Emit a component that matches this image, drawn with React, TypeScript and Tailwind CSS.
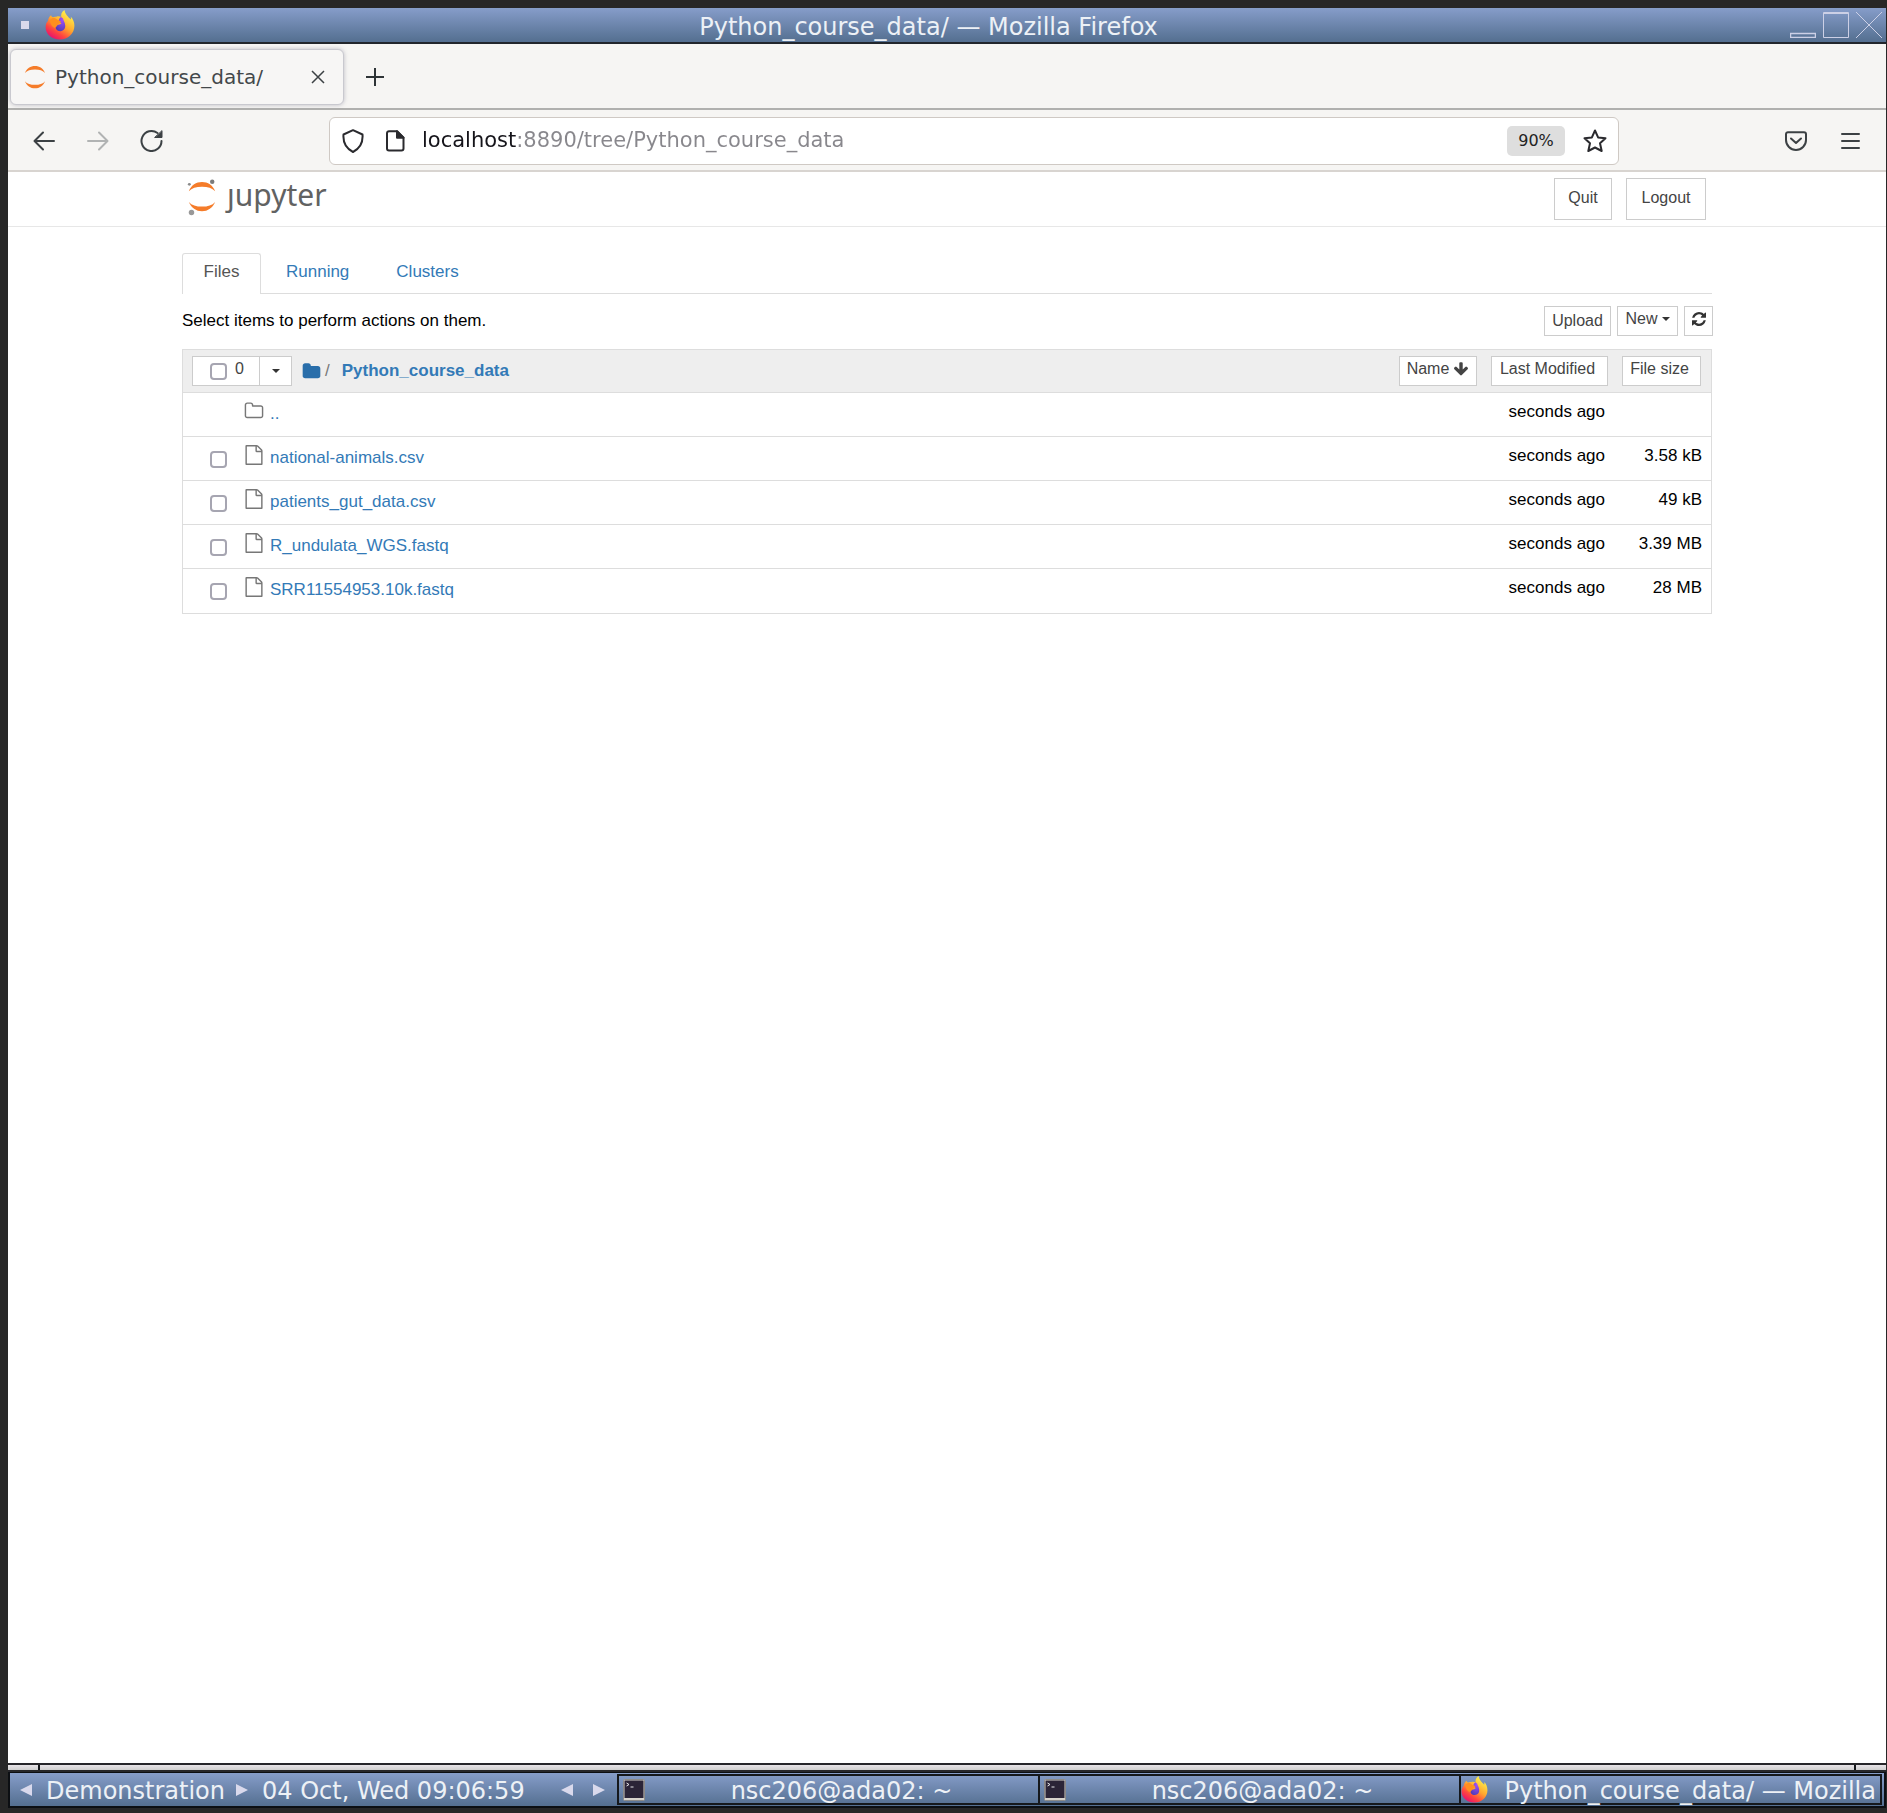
import type { ReactNode } from "react";

const files = [
  { name: "..", modified: "seconds ago", size: "", folder: true },
  { name: "national-animals.csv", modified: "seconds ago", size: "3.58 kB", folder: false },
  { name: "patients_gut_data.csv", modified: "seconds ago", size: "49 kB", folder: false },
  { name: "R_undulata_WGS.fastq", modified: "seconds ago", size: "3.39 MB", folder: false },
  { name: "SRR11554953.10k.fastq", modified: "seconds ago", size: "28 MB", folder: false },
];

const FILE_PATH =
  "M1596 380q28 28 48 76t20 88v1152q0 40-28 68t-68 28h-1344q-40 0-68-28t-28-68v-1600q0-40 28-68t68-28h896q40 0 88 20t76 48zm-444-244v376h376q-10-29-22-41l-313-313q-12-12-41-22zm384 1528v-1024h-416q-40 0-68-28t-28-68v-416h-768v1536h1280z";
const FOLDER_OPEN_PATH =
  "M1600 1312v-704q0-40-28-68t-68-28h-704q-40 0-68-28t-28-68v-64q0-40-28-68t-68-28h-320q-40 0-68 28t-28 68v960q0 40 28 68t68 28h1216q40 0 68-28t28-68zm128-704v704q0 92-66 158t-158 66h-1216q-92 0-158-66t-66-158v-960q0-92 66-158t158-66h320q92 0 158 66t66 158v32h672q92 0 158 66t66 158z";
const FOLDER_PATH =
  "M1728 608v704q0 92-66 158t-158 66h-1216q-92 0-158-66t-66-158v-960q0-92 66-158t158-66h320q92 0 158 66t66 158v32h672q92 0 158 66t66 158z";
const ARROW_DOWN_PATH =
  "M1675 832q0 53-37 90l-651 652q-39 37-91 37-53 0-90-37l-651-652q-38-36-38-90 0-53 38-91l74-75q39-37 91-37 53 0 90 37l294 294v-704q0-52 38-90t90-38h128q52 0 90 38t38 90v704l294-294q37-37 90-37 52 0 91 37l75 75q37 39 37 91z";
const REFRESH_PATH =
  "M1511 928q0 5-1 7-64 268-268 434.5t-478 166.5q-146 0-282.5-55t-243.5-157l-129 129q-19 19-45 19t-45-19-19-45v-448q0-26 19-45t45-19h448q26 0 45 19t19 45-19 45l-137 137q71 66 161 102t187 36q134 0 250-65t186-179q11-17 53-117 8-23 30-23h192q13 0 22.5 9.5t9.5 22.5zm25-800v448q0 26-19 45t-45 19h-448q-26 0-45-19t-19-45 19-45l138-138q-148-137-349-137-134 0-250 65t-186 179q-11 17-53 117-8 23-30 23h-199q-13 0-22.5-9.5t-9.5-22.5v-7q65-268 270-434.5t480-166.5q146 0 284 55.5t245 156.5l130-129q19-19 45-19t45 19 19 45z";

function FirefoxIcon({ id, className }: { id: string; className: string }) {
  return (
    <svg viewBox="0 0 30 30" className={className} aria-hidden="true">
      <defs>
        <linearGradient id={`${id}-body`} x1="0.85" y1="0.15" x2="0.3" y2="1">
          <stop offset="0" stopColor="#fff04a" />
          <stop offset="0.45" stopColor="#ffa52e" />
          <stop offset="0.75" stopColor="#ff453f" />
          <stop offset="1" stopColor="#e9126e" />
        </linearGradient>
        <radialGradient id={`${id}-core`} cx="0.7" cy="0.2" r="0.9">
          <stop offset="0" stopColor="#a24dfb" />
          <stop offset="1" stopColor="#4b3cb4" />
        </radialGradient>
      </defs>
      <path
        d="M19.500 0c-3 2-3.800 4.500-3.200 7-1.800-.8-3.500-.8-5-.3C9.600 6.500 8.500 6.700 8 7.300 7 7 6.200 6 6 5.200 4 6.800 3.200 9 3 11 1.500 11.800.8 14.500.6 17c0 7.400 6.300 12.500 14.200 12.500 8.200 0 14.600-6 14.600-13.700 0-3.600-1.400-7-3.600-9 .2 1 .2 2 0 2.800C23.500 7 20 4.500 19.500 0z"
        fill={`url(#${id}-body)`}
      />
      <path d="M16 7c-2 1-2.500 3.500-2 5l2.500 1.200c-1.500 2-3.700 1.400-5.800 2.300-.8 3.500 1.800 6 4.800 5.700 3.200-.4 5-2.700 4.700-5.700C20 12 18.500 11 18 8.500z" fill={`url(#${id}-core)`} />
      <path d="M5 10c2-3 5.500-2.500 7-.5 1.300.8 3 1 4 2-.6 1.700-2.700 1.800-3.400 2.900-.2 1.800-1.800 2.300-2.600 3.500C7 17 5 14 5 10z" fill="#ff8f1f" />
    </svg>
  );
}

function JupyterMark({ className, dots }: { className: string; dots: boolean }) {
  return (
    <svg viewBox={dots ? "0 0 30 38" : "1 2 28 32"} className={className} aria-hidden="true">
      <path d="M1.500 12.500C4 6.500 9 3.200 15 3.200s11 3.300 13.500 9.300C25.500 9.500 21 8 15 8s-10.500 1.500-13.500 4.500z" fill="#f57c2a" />
      <path d="M1.500 23.500C4 29.500 9 33 15 33s11-3.500 13.500-9.500C25.500 27 21 28.300 15 28.300s-10.500-1.300-13.500-4.800z" fill="#f57c2a" />
      {dots && (
        <>
          <circle cx="25.500" cy="2.800" r="2.300" fill="#7b7b7b" />
          <circle cx="2" cy="5.500" r="1.500" fill="#8a8a8a" />
          <circle cx="4.200" cy="34.500" r="2.800" fill="#999" />
        </>
      )}
    </svg>
  );
}

function TerminalIcon() {
  return (
    <svg viewBox="0 0 22 22" className="ml-1 size-5.5 shrink-0" aria-hidden="true">
      <rect x="0.5" y="0.5" width="21" height="21" rx="1" fill="#d6d2cc" stroke="#8c8a88" />
      <rect x="1.500" y="1.500" width="19" height="17.500" fill="#2b2437" />
      <path d="M3.500 4l2.500 1.500L3.500 7M7.500 8h3" stroke="#e8e6ea" fill="none" />
    </svg>
  );
}

function Glyph({ d, box = 1792, className }: { d: string; box?: number; className: string }) {
  return (
    <svg viewBox={`0 0 ${box} ${box}`} className={className} fill="currentColor" aria-hidden="true">
      <path d={d} />
    </svg>
  );
}

function Triangle({ left = false, label, className }: { left?: boolean; label: string; className: string }) {
  return (
    <button aria-label={label} className={className}>
      <svg viewBox="0 0 12 12" className="size-3" fill="#d9d9ec" aria-hidden="true">
        <path d={left ? "M12 0v12L0 6z" : "M0 0v12l12-6z"} />
      </svg>
    </button>
  );
}

function Caret() {
  return (
    <svg viewBox="0 0 8 4" className="h-1 w-2" fill="#333" aria-hidden="true">
      <path d="M0 0h8L4 4z" />
    </svg>
  );
}

function PageButton({ className, label, children }: { className: string; label?: string; children: ReactNode }) {
  return (
    <button aria-label={label} className={`flex items-center justify-center border border-[#ccc] bg-white text-base text-[#444] ${className}`}>
      {children}
    </button>
  );
}

function Check({ label, className = "" }: { label: string; className?: string }) {
  return (
    <input
      type="checkbox"
      aria-label={label}
      className={`block size-[17px] shrink-0 appearance-none rounded-[4px] border-2 border-[#a6a5b1] bg-white ${className}`}
    />
  );
}

function Task({ title, icon, align }: { title: string; icon: ReactNode; align: string }) {
  return (
    <button className="flex min-w-0 flex-1 items-center border-2 border-l-0 border-[#15181c]">
      {icon}
      <span className={`min-w-0 flex-1 pt-0.5 leading-7 whitespace-nowrap ${align}`}>{title}</span>
    </button>
  );
}

function TitleBar() {
  return (
    <header className="flex h-9 items-center border-b-2 border-[#22262c] bg-linear-to-b from-[#869dca] to-[#546f90] text-[#edf1f6]">
      <button aria-label="Window menu" className="ml-[13px] size-2 bg-[#d9d9ec]" />
      <FirefoxIcon id="title" className="ml-4 size-[30px]" />
      <h1 className="flex-1 pt-1 pr-2 text-center text-2xl leading-8">Python_course_data/ — Mozilla Firefox</h1>
      <div className="flex items-center gap-[7px] pr-1">
        <button aria-label="Minimise">
          <svg viewBox="0 0 26 26" className="size-6.5" fill="none" stroke="#ccd0e6" aria-hidden="true">
            <path d="M0.500 21.500h25v4h-25z" strokeWidth="1.500" />
          </svg>
        </button>
        <button aria-label="Maximise">
          <svg viewBox="0 0 26 26" className="size-6.5" fill="none" stroke="#ccd0e6" aria-hidden="true">
            <path d="M.5.5h25v25H.5zM0 1.500h26" />
          </svg>
        </button>
        <button aria-label="Close window">
          <svg viewBox="0 0 26 26" className="size-6.5" fill="none" stroke="#ccd0e6" aria-hidden="true">
            <path d="M0 0l26 26M26 0L0 26" />
          </svg>
        </button>
      </div>
    </header>
  );
}

function TabStrip() {
  return (
    <div className="flex h-[66px] items-center border-b-2 border-[#b0b0ae] pt-0.5 pl-0.5">
      <div className="flex h-14 w-[334px] items-center rounded-md border border-[#c9c9cf] bg-[#f7f6f5] pr-4 pl-3 shadow-[0_0_4px_rgba(80,80,110,0.35)]">
        <JupyterMark className="size-6" dots={false} />
        <span className="flex-1 pl-2 text-xl text-[#43484b]">Python_course_data/</span>
        <button aria-label="Close tab" className="p-0.5">
          <svg viewBox="0 0 14 14" className="size-3.5" fill="none" stroke="#3c4144" strokeWidth="1.500" aria-hidden="true">
            <path d="M1 1l12 12M13 1L1 13" />
          </svg>
        </button>
      </div>
      <button aria-label="New tab" className="ml-5.5">
        <svg viewBox="0 0 18 18" className="size-4.5" fill="none" stroke="#2e3436" strokeWidth="2" aria-hidden="true">
          <path d="M9 0v18M0 9h18" />
        </svg>
      </button>
    </div>
  );
}

function Toolbar() {
  return (
    <nav className="flex h-[62px] items-center border-b-2 border-[#d8d4d0] pt-px pr-[26px] pl-[25px] text-[#3c4144]">
      <button aria-label="Back">
        <svg viewBox="0 0 22 20" className="h-5 w-5.5" fill="none" stroke="currentColor" strokeWidth="2" strokeLinecap="round" strokeLinejoin="round" aria-hidden="true">
          <path d="M21 10H2M10 1.500L1.500 10l8.500 8.500" />
        </svg>
      </button>
      <button aria-label="Forward" disabled className="ml-8 text-[#b1b3b3]">
        <svg viewBox="0 0 22 20" className="h-5 w-5.5" fill="none" stroke="currentColor" strokeWidth="2" strokeLinecap="round" strokeLinejoin="round" aria-hidden="true">
          <path d="M1 10h19M12 1.500l8.500 8.500-8.500 8.500" />
        </svg>
      </button>
      <button aria-label="Reload" className="ml-[31px]">
        <svg viewBox="0 0 23 23" className="size-[23px]" fill="none" stroke="currentColor" strokeWidth="2" strokeLinecap="round" aria-hidden="true">
          <path d="M21.500 12A10 10 0 1 1 17.500 4" />
          <path d="M22 2v6.500h-7z" fill="currentColor" strokeWidth="1" strokeLinejoin="round" />
        </svg>
      </button>
      <div className="mr-[166px] ml-[166px] flex h-12 min-w-0 flex-1 items-center rounded-md border border-[#cfc9c4] bg-white pr-[11px] pl-3 text-[#2a2a2e]">
        <button aria-label="Tracking protection">
          <svg viewBox="0 0 22 24" className="h-6 w-5.5" fill="none" stroke="currentColor" strokeWidth="2" strokeLinejoin="round" aria-hidden="true">
            <path d="M11 1.200l9.500 4.300c.7 8.500-2.500 14-9.500 17.500-7-3.500-10.200-9-9.500-17.500z" />
          </svg>
        </button>
        <button aria-label="Site information" className="ml-[21px]">
          <svg viewBox="0 0 20 22" className="h-5.5 w-5" fill="none" stroke="currentColor" strokeWidth="2" strokeLinejoin="round" aria-hidden="true">
            <path d="M4 1.200h8l6.500 6.500V18.500a2 2 0 0 1-2 2H4a2 2 0 0 1-2-2V3.200a2 2 0 0 1 2-2z" />
            <path d="M12 1.200v6.500h6.500z" fill="currentColor" />
          </svg>
        </button>
        <input
          type="text"
          aria-label="Address"
          defaultValue="localhost:8890/tree/Python_course_data"
          className="ml-[17px] min-w-0 flex-1 bg-[linear-gradient(to_right,#15141a_95px,#88878c_95px)] bg-clip-text text-[21px] text-transparent outline-none"
        />
        <button className="h-[30px] w-[58px] rounded-[5px] bg-[#dedede] text-base text-[#222]">90%</button>
        <button aria-label="Bookmark this page" className="ml-[18px]">
          <svg viewBox="0 0 24 24" className="size-6" fill="none" stroke="currentColor" strokeWidth="2" strokeLinejoin="round" aria-hidden="true">
            <path d="M12 1.500l3.100 6.900 7.400.8-5.500 5 1.700 7.800L12 18.500 5.300 22 7 14.200l-5.500-5 7.400-.8z" />
          </svg>
        </button>
      </div>
      <button aria-label="Save to Pocket">
        <svg viewBox="0 0 22 20" className="h-5 w-5.5" fill="none" stroke="currentColor" strokeWidth="2" strokeLinecap="round" strokeLinejoin="round" aria-hidden="true">
          <path d="M3 1.200h16a2 2 0 0 1 2 2V9a10 10 0 0 1-20 0V3.200a2 2 0 0 1 2-2z" />
          <path d="M6 7.500l5 4.500 5-4.500" />
        </svg>
      </button>
      <button aria-label="Open application menu" className="ml-[34px]">
        <svg viewBox="0 0 19 16" className="h-4 w-[19px]" stroke="currentColor" strokeWidth="2" strokeLinecap="round" aria-hidden="true">
          <path d="M1 1h17M1 8h17M1 15h17" />
        </svg>
      </button>
    </nav>
  );
}

function FileTable() {
  return (
    <div className="mt-[13px] border border-[#ddd]">
      <table className="w-full border-separate border-spacing-0 text-[17px] leading-6">
        <thead>
          <tr className="h-[43px] bg-[#eee] align-top font-normal">
            <th className="border-b border-[#ddd] pt-1.5 pl-[9px] text-left">
              <div className="flex items-center">
                <div className="flex h-[30px] border border-[#ccc] bg-white">
                  <label className="flex w-[66px] gap-2 pt-1.5 pl-[17px] text-base leading-5 font-normal text-[#444]">
                    <Check label="Select all" />
                    <span className="-mt-1">0</span>
                  </label>
                  <button aria-label="Select by type" className="flex w-8 items-center justify-center border-l border-[#ccc]">
                    <Caret />
                  </button>
                </div>
                <a href="#" aria-label="Home folder" className="ml-2.5 text-[#296eaa]">
                  <Glyph d={FOLDER_PATH} className="size-[19px]" />
                </a>
                <span className="ml-1 font-normal text-[#777]">/</span>
                <a href="#" className="ml-3 font-bold text-[#337ab7]">Python_course_data</a>
                <PageButton className="ml-auto h-[30px] w-[78px] gap-1 pb-1 font-normal">
                  Name <Glyph d={ARROW_DOWN_PATH} className="size-4" />
                </PageButton>
              </div>
            </th>
            <th className="w-[131px] border-b border-[#ddd] pt-1.5">
              <PageButton className="ml-auto h-[30px] w-[117px] pr-1 pb-1 font-normal">Last Modified</PageButton>
            </th>
            <th className="w-[103px] border-b border-[#ddd] pt-1.5 pr-2.5">
              <PageButton className="ml-auto h-[30px] w-[79px] pr-1 pb-1 font-normal">File size</PageButton>
            </th>
          </tr>
        </thead>
        <tbody className="[&>tr:last-child>td]:border-b-0">
          {files.map((file) => (
            <tr key={file.name} className="h-11 align-top">
              <td className="border-b border-[#ddd]">
                <div className="flex pl-[27px]">
                  {file.folder ? <span className="w-[17px]" /> : <Check label={file.name} className="mt-3.5" />}
                  <Glyph d={file.folder ? FOLDER_OPEN_PATH : FILE_PATH} className="mt-2 ml-[17px] size-5 text-[#777]" />
                  <a href="#" className="mt-[9px] ml-1.5 text-[#337ab7]">{file.name}</a>
                </div>
              </td>
              <td className="border-b border-[#ddd] pt-[7px] pr-[3px] text-right">{file.modified}</td>
              <td className="border-b border-[#ddd] pt-[7px] pr-[9px] text-right">{file.size}</td>
            </tr>
          ))}
        </tbody>
      </table>
    </div>
  );
}

function JupyterPage() {
  return (
    <main className="flex-1 bg-white font-['Liberation_Sans',Arial,sans-serif] text-[17px] leading-6 text-black">
      <div className="flex h-[55px] border-b border-[#e7e7e7] px-[174px]">
        <a href="#" aria-label="Jupyter home" className="flex pt-[7px] pl-[5px]">
          <JupyterMark className="h-[37px] w-[30px]" dots />
          <span className="-mt-1 ml-2.5 font-['Noto_Sans',sans-serif] text-[30px] leading-10 text-[#616262]">ȷupyter</span>
        </a>
        <div className="ml-auto flex gap-3.5 pt-1.5 pr-1.5">
          <PageButton className="h-[42px] w-[58px] pb-0.5">Quit</PageButton>
          <PageButton className="h-[42px] w-20 pb-0.5">Logout</PageButton>
        </div>
      </div>

      <div className="px-[174px] pt-[26px]">
        <div className="flex border-b border-[#ddd]">
          <button className="-mb-px h-[41px] w-[79px] rounded-t-[3px] border border-b-0 border-[#ddd] bg-white pb-1 text-[#555]">Files</button>
          <a href="#" className="ml-[25px] pt-[7px] text-[#337ab7]">Running</a>
          <a href="#" className="ml-[47px] pt-[7px] text-[#337ab7]">Clusters</a>
        </div>

        <div className="flex pt-3">
          <p className="pt-[3px]">Select items to perform actions on them.</p>
          <div className="-mr-px ml-auto flex gap-1.5">
            <PageButton className="h-[30px] w-[67px]">Upload</PageButton>
            <PageButton className="h-[30px] w-[61px] gap-1 pb-1">
              New <Caret />
            </PageButton>
            <PageButton className="h-[30px] w-[29px] pb-1" label="Refresh">
              <Glyph d={REFRESH_PATH} box={1536} className="size-3.5 text-[#333]" />
            </PageButton>
          </div>
        </div>

        <FileTable />
      </div>
    </main>
  );
}

function Taskbar() {
  return (
    <footer className="flex h-9 border-2 border-t border-[#0c0f13] bg-linear-to-b from-[#869dca] to-[#546f90] text-2xl leading-9 whitespace-nowrap text-[#edf1f6]">
      <Triangle left label="Previous workspace" className="ml-[10px]" />
      <span className="ml-3.5">Demonstration</span>
      <Triangle label="Next workspace" className="ml-[11px]" />
      <time className="ml-3.5">04 Oct, Wed 09:06:59</time>
      <Triangle left label="Previous window" className="ml-auto pl-4" />
      <Triangle label="Next window" className="ml-5" />
      <div className="my-px mr-0.5 ml-3 flex w-[1265px] max-w-[68%] border-l-2 border-[#15181c]">
        <Task title="nsc206@ada02: ~" icon={<TerminalIcon />} align="text-center" />
        <Task title="nsc206@ada02: ~" icon={<TerminalIcon />} align="text-center" />
        <Task title="Python_course_data/ — Mozilla" icon={<FirefoxIcon id="task" className="size-[27px] shrink-0" />} align="pr-1 text-right" />
      </div>
    </footer>
  );
}

export default function App() {
  return (
    <div className="flex min-h-screen flex-col bg-[#272727] pt-2 pr-px pb-[5px] pl-2 font-['DejaVu_Sans',sans-serif]">
      <TitleBar />
      <div className="bg-[#f6f5f3]">
        <TabStrip />
        <Toolbar />
      </div>
      <JupyterPage />
      <div className="flex h-[9px] justify-between border-y-2 border-[#26262a] bg-linear-to-b from-[#e8e4e8] to-[#cfcfcf] px-[30px]">
        <span className="w-0.5 bg-[#15181c]" />
        <span className="w-0.5 bg-[#15181c]" />
      </div>
      <Taskbar />
    </div>
  );
}
